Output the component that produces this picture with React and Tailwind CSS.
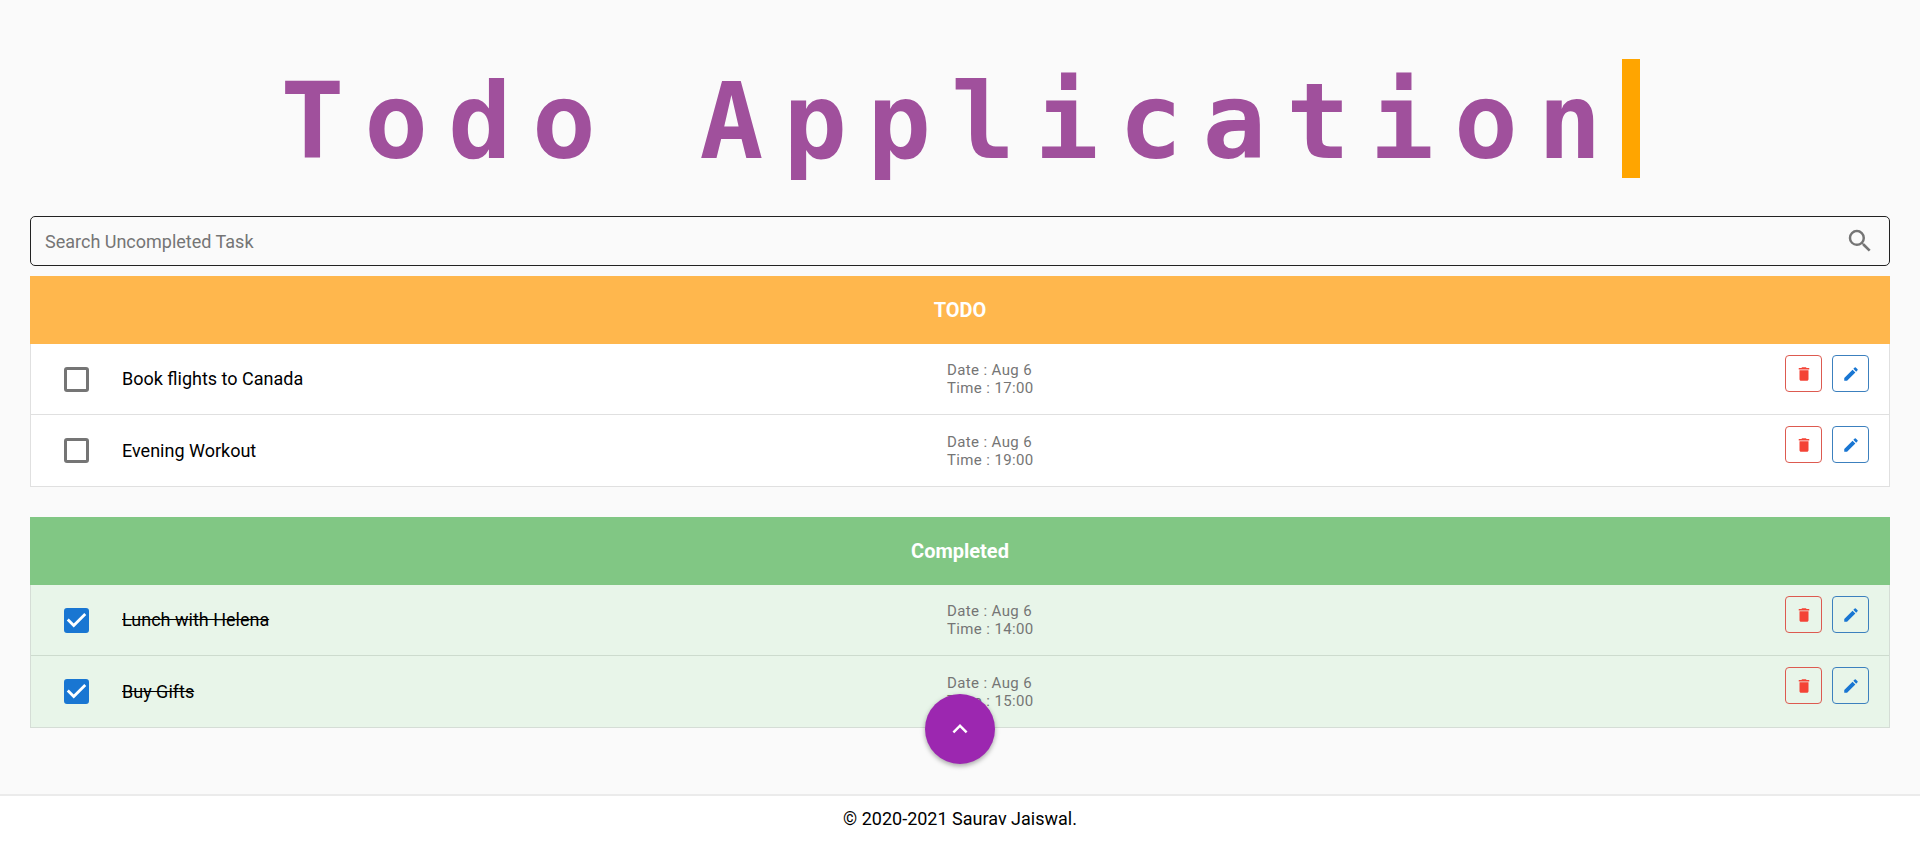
import { useState } from "react";
import { MdDelete, MdEdit, MdKeyboardArrowUp, MdSearch } from "react-icons/md";

const initialTasks = [
  { id: 1, title: "Book flights to Canada", date: "Aug 6", time: "17:00", done: false },
  { id: 2, title: "Evening Workout", date: "Aug 6", time: "19:00", done: false },
  { id: 3, title: "Lunch with Helena", date: "Aug 6", time: "14:00", done: true },
  { id: 4, title: "Buy Gifts", date: "Aug 6", time: "15:00", done: true },
];

function TaskRow({ task, onToggle, onDelete }) {
  const inputId = `task-${task.id}`;
  return (
    <li className="grid h-[71px] grid-cols-[91px_17fr_19fr] items-center pr-5">
      <span className="pl-[33px]">
        <span className="relative block size-[25px]">
          <input
            id={inputId}
            type="checkbox"
            checked={task.done}
            onChange={() => onToggle(task.id)}
            className="block size-[25px] cursor-pointer appearance-none rounded-[3px] border-3 border-[#757575] checked:border-[#1976d2] checked:bg-[#1976d2]"
          />
          {task.done && (
            <svg
              viewBox="3 3 18 18"
              aria-hidden="true"
              className="pointer-events-none absolute inset-0 size-[25px] fill-white"
            >
              <path d="M10 17l-5-5 1.41-1.41L10 14.17l7.59-7.59L19 8l-9 9z" />
            </svg>
          )}
        </span>
      </span>
      <label
        htmlFor={inputId}
        className={task.done ? "justify-self-start line-through" : "justify-self-start"}
      >
        {task.title}
      </label>
      <div className="flex items-center justify-between self-stretch">
        <p className="text-[15px] leading-[18px] tracking-wide text-[#757575]">
          Date : {task.date}
          <br />
          Time : {task.time}
        </p>
        <div className="flex gap-2.5 self-start pt-[11px]">
          <button
            type="button"
            aria-label="Delete"
            onClick={() => onDelete(task.id)}
            className="flex size-[37px] items-center justify-center rounded border border-[#dd5a50] text-[#f44336]"
          >
            <MdDelete className="size-[18px]" />
          </button>
          <button
            type="button"
            aria-label="Edit"
            className="flex size-[37px] items-center justify-center rounded border border-[#3c80be] text-[#1976d2]"
          >
            <MdEdit className="size-[18px]" />
          </button>
        </div>
      </div>
    </li>
  );
}

function TaskList({ heading, headingClass, listClass, tasks, onToggle, onDelete }) {
  return (
    <section>
      <h2
        className={`flex h-[68px] items-center justify-center text-xl font-bold text-white ${headingClass}`}
      >
        {heading}
      </h2>
      <ul className={`divide-y border-x border-b ${listClass}`}>
        {tasks.map((task) => (
          <TaskRow key={task.id} task={task} onToggle={onToggle} onDelete={onDelete} />
        ))}
      </ul>
    </section>
  );
}

export default function App() {
  const [tasks, setTasks] = useState(initialTasks);
  const [query, setQuery] = useState("");

  const toggle = (id) =>
    setTasks((list) => list.map((t) => (t.id === id ? { ...t, done: !t.done } : t)));
  const remove = (id) => setTasks((list) => list.filter((t) => t.id !== id));

  const open = tasks.filter(
    (t) => !t.done && t.title.toLowerCase().includes(query.toLowerCase())
  );
  const completed = tasks.filter((t) => t.done);

  return (
    <div className="flex min-h-screen flex-col bg-[#fafafa] font-['Roboto',sans-serif] text-lg text-black">
      <header className="flex justify-center pt-[59px]">
        <h1 className="h-[119px] border-r-[18px] border-[#ffa500] font-['DejaVu_Sans_Mono',monospace] text-[106px] leading-[126px] font-bold tracking-[20px] whitespace-nowrap text-[#a0509c]">
          Todo Application
        </h1>
      </header>

      <main className="flex flex-col px-[30px] pt-[38px] pb-16">
        <div className="mb-2.5 flex h-[50px] items-center rounded-[5px] border border-[#222] pr-3.5 pl-3.5">
          <input
            type="text"
            aria-label="Search Uncompleted Task"
            placeholder="Search Uncompleted Task"
            value={query}
            onChange={(e) => setQuery(e.target.value)}
            className="h-full min-w-0 flex-1 bg-transparent outline-none placeholder:text-[#757575]"
          />
          <MdSearch className="size-[30px] text-[#757575]" />
        </div>

        <div className="flex flex-col gap-[30px]">
          <TaskList
            heading="TODO"
            headingClass="bg-[#ffb74d]"
            listClass="divide-[#e0e0e0] border-[#e0e0e0] bg-white"
            tasks={open}
            onToggle={toggle}
            onDelete={remove}
          />
          <TaskList
            heading="Completed"
            headingClass="bg-[#81c784]"
            listClass="divide-[#cddbce] border-[#d5ddd6] bg-[#e8f5e9]"
            tasks={completed}
            onToggle={toggle}
            onDelete={remove}
          />
        </div>
      </main>

      <footer className="mt-auto flex h-[47px] items-center justify-center border-t-2 border-[#ebebeb] bg-white">
        © 2020-2021 Saurav Jaiswal.
      </footer>

      <button
        type="button"
        aria-label="Scroll to top"
        onClick={() => window.scrollTo({ top: 0, behavior: "smooth" })}
        className="fixed bottom-[77px] left-1/2 flex size-[70px] -translate-x-1/2 items-center justify-center rounded-full bg-[#9c27b0] text-white shadow-[0_2px_5px_rgba(0,0,0,0.35)]"
      >
        <MdKeyboardArrowUp className="size-[30px] stroke-current" />
      </button>
    </div>
  );
}
